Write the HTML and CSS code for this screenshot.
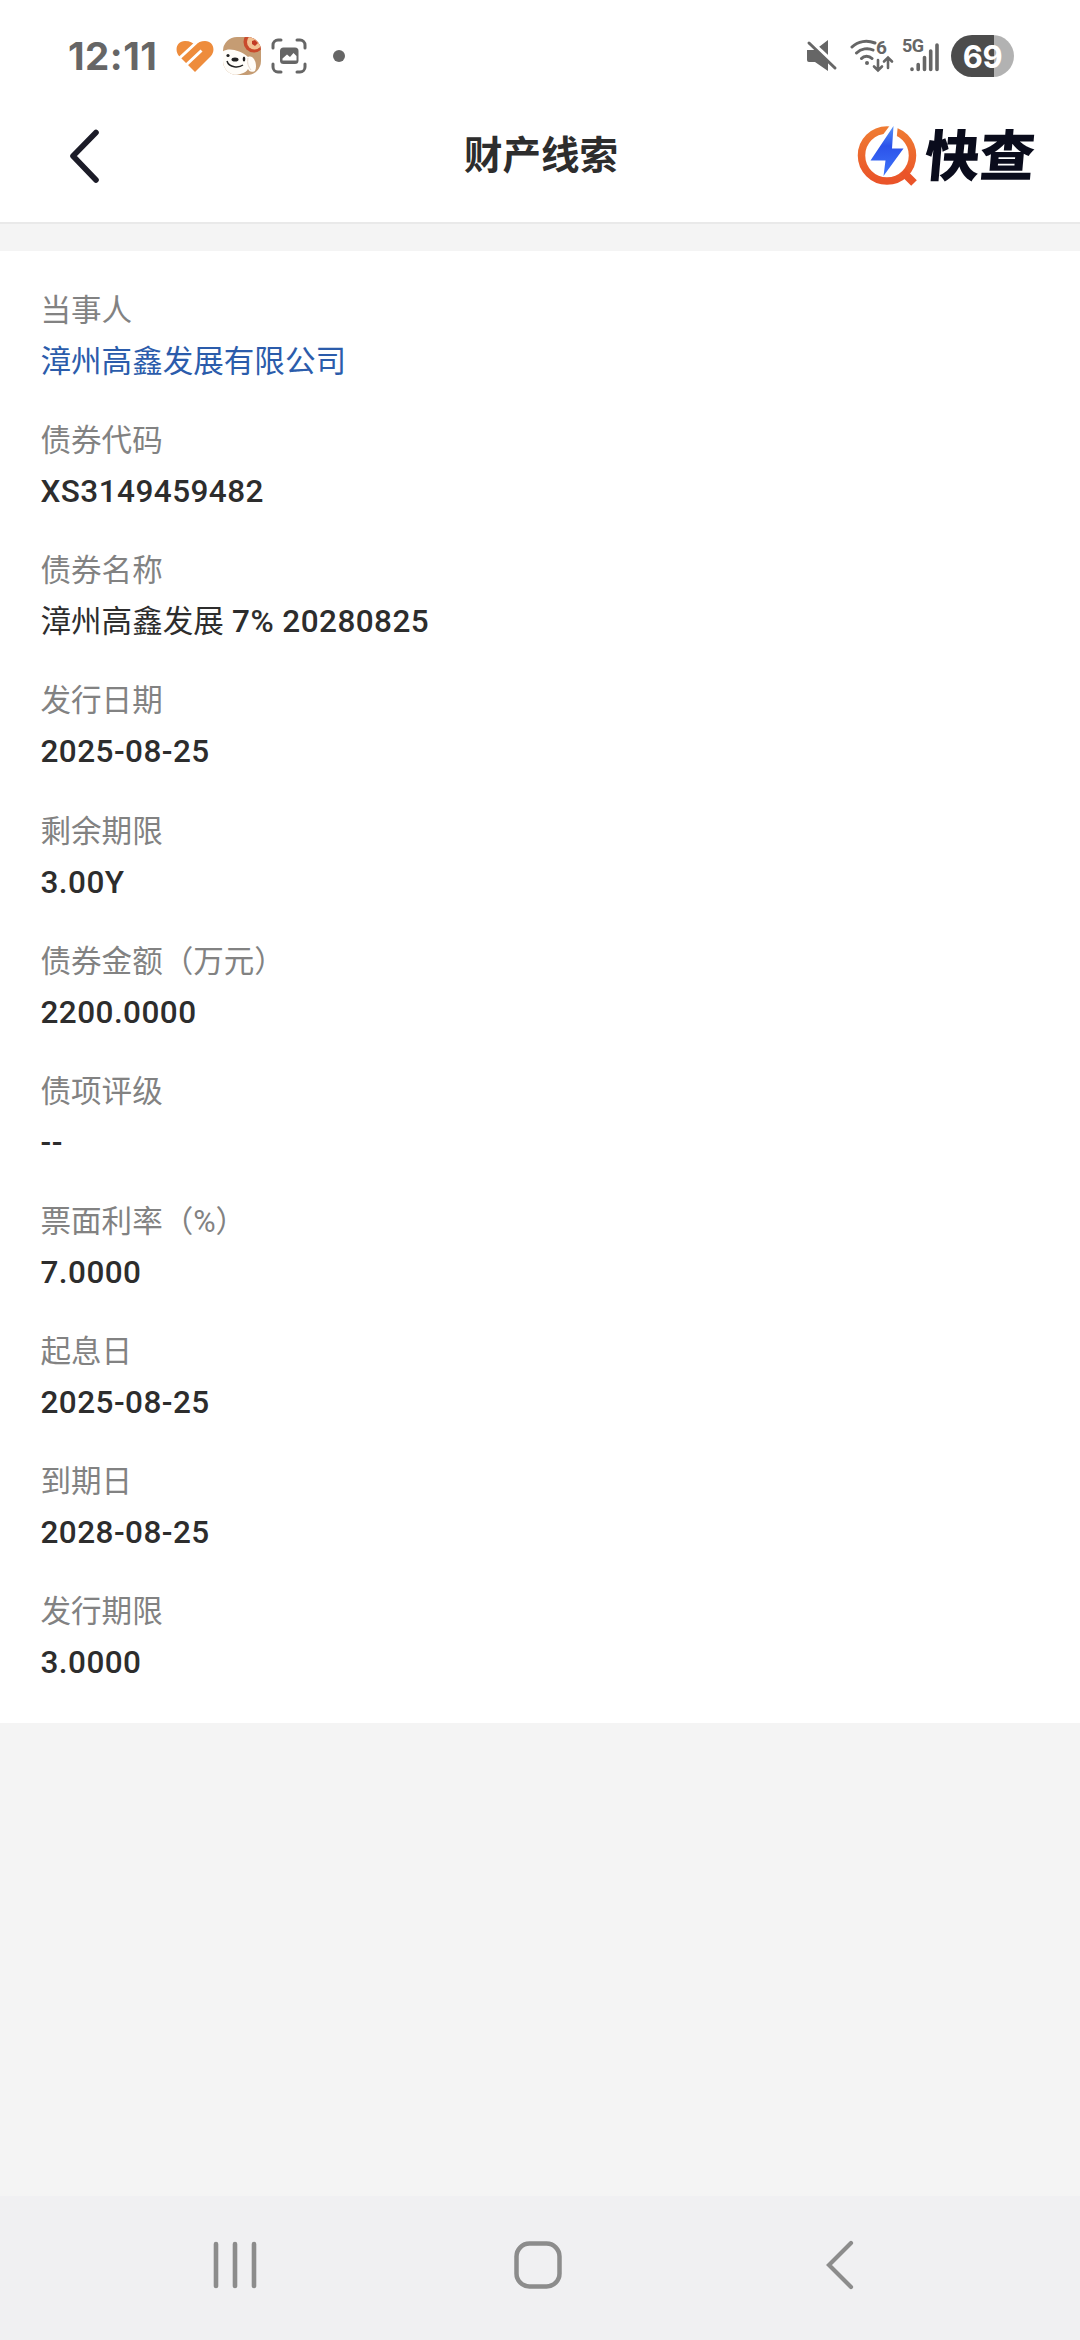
FILE: index.html
```html
<!DOCTYPE html>
<html lang="zh-CN">
<head>
  <meta charset="UTF-8" />
  <title>财产线索</title>
  <meta name="viewport" content="width=device-width, initial-scale=1.0" />
  <link rel="stylesheet" href="styles.css">
</head>
<body>
  <div class="status-bar">
    <span class="time">12:11</span>
    <svg class="heart" width="38" height="34" viewBox="0 0 38 34">
      <path d="M19 33L3 17C-2 11 1 2 9 2C14 2 17 4 19 6C22 3 25 2 29 2C37 2 40 11 35 17Z" fill="#ee8c3c" />
      <path d="M2 20.500L22 2M9 27L25.500 11.500" stroke="#fff" stroke-width="3" />
    </svg>
    <svg class="avatar" width="38" height="38" viewBox="0 0 38 38">
      <defs><clipPath id="round"><rect width="38" height="38" rx="14" /></clipPath></defs>
      <g clip-path="url(#round)">
        <rect width="38" height="38" fill="#c59c73" />
        <circle cx="31" cy="5" r="10.500" fill="#c94a2c" />
        <circle cx="31.500" cy="5" r="7.500" fill="#f2c193" />
        <path d="M29 4l3-1 3 3-3 3-3-2z" fill="#c23b25" />
        <path d="M-1 15 C5 10 17 13 25 20 C31 17 35 28 32 34 C28 36 26 34 25 32 C23 36 16 38 9 38 L-1 32Z" fill="#fffdf9" />
        <path d="M25 21 C24 26 25 29 28 33" fill="none" stroke="#e5d6c9" stroke-width="1" />
        <ellipse cx="12" cy="22.500" rx="3.500" ry="2" fill="#222" />
        <circle cx="5" cy="18.500" r="1.600" fill="#222" />
        <ellipse cx="21" cy="22" rx="1.300" ry="2.500" fill="#222" />
        <path d="M4 24 C6 31 16 31 20 28" fill="none" stroke="#222" stroke-width="1.500" />
      </g>
    </svg>
    <svg class="capture" width="36" height="36" viewBox="0 0 36 36">
      <g fill="none" stroke="#666" stroke-width="3" stroke-linecap="round">
        <path d="M2 10V7a5 5 0 0 1 5-5h3M26 2h3a5 5 0 0 1 5 5v3M34 26v3a5 5 0 0 1-5 5h-3M10 34H7a5 5 0 0 1-5-5v-3" />
      </g>
      <rect x="9" y="9.500" width="18.500" height="16.500" rx="3.500" fill="#666" />
      <path d="M11.500 22.500v-2l4.500-4 3 2.500 3.500-4 3 3v4.500z" fill="#fff" />
    </svg>
    <span class="dot"></span>

    <svg class="mute" width="32" height="32" viewBox="0 0 32 32">
      <path d="M1 10h8L22 0v31L9 22H3a2 2 0 0 1-2-2z" fill="#666" />
      <path d="M2 -1L31 26" stroke="#fff" stroke-width="4" />
      <path d="M3 3L29 28" stroke="#666" stroke-width="3" stroke-linecap="round" />
    </svg>
    <svg class="wifi" width="44" height="40" viewBox="0 -3 44 40">
      <g fill="none" stroke="#666" stroke-width="3" stroke-linecap="round">
        <path d="M2 8C8 2 17 1 25 4M6.500 14C11 9.500 18 8.500 23 11M11.500 19.500C14 16.500 19 16.500 22 19.500" />
        <path d="M28 21v10M24 27.500l4 4 4-4M38 29V19M34 22.500l4-4 4 4" stroke-width="2.600" />
      </g>
      <circle cx="17" cy="24" r="2" fill="#666" />
      <text x="26" y="14.500" class="wifi-gen">6</text>
    </svg>
    <svg class="signal" width="38" height="42" viewBox="0 -4 38 42">
      <text x="0" y="13" class="net-type">5G</text>
      <g stroke="#666" stroke-width="3.600" stroke-linecap="round">
        <path d="M10 30v.5M16.200 25.500v5M22.500 18.500v12M28.700 12v18.500M35 6v24.500" />
      </g>
    </svg>
    <span class="battery">69</span>
  </div>

  <header class="header">
    <svg class="back" width="36" height="58" viewBox="0 0 36 58">
      <path d="M30 5.500L7 29l23 24" fill="none" stroke="#1c1c28" stroke-width="5.600" stroke-linecap="round" stroke-linejoin="round" />
    </svg>
    <h1>财产线索</h1>
    <div class="brand">
      <svg width="60" height="62" viewBox="0 0 60 62">
        <defs>
          <linearGradient id="ring" x1="0" y1="0" x2="0" y2="1">
            <stop offset="0" stop-color="#ef7a32" />
            <stop offset="1" stop-color="#ea5429" />
          </linearGradient>
          <linearGradient id="bolt" x1="0" y1="0" x2="0" y2="1">
            <stop offset="0" stop-color="#5792f8" />
            <stop offset=".4" stop-color="#2b52ea" />
            <stop offset="1" stop-color="#3f75fa" />
          </linearGradient>
        </defs>
        <circle cx="30" cy="30.500" r="25.500" fill="none" stroke="url(#ring)" stroke-width="7.500" />
        <path d="M46 47l11 11" stroke="#ea5429" stroke-width="8" />
        <path d="M25 11L34 -1L41 -1L39 20Z" fill="#fff" />
        <path d="M36.500 1L35 23.500H46.500L26.500 51L28.500 35.500H13.500Z" fill="url(#bolt)" />
      </svg>
      <span>快查</span>
    </div>
  </header>

  <main class="card">
    <div class="item">
      <div class="label">当事人</div>
      <div class="value link"><span class="cn">漳州高鑫发展有限公司</span></div>
    </div>
    <div class="item">
      <div class="label">债券代码</div>
      <div class="value">XS3149459482</div>
    </div>
    <div class="item">
      <div class="label">债券名称</div>
      <div class="value"><span class="cn">漳州高鑫发展</span> 7% 20280825</div>
    </div>
    <div class="item">
      <div class="label">发行日期</div>
      <div class="value">2025-08-25</div>
    </div>
    <div class="item">
      <div class="label">剩余期限</div>
      <div class="value">3.00Y</div>
    </div>
    <div class="item">
      <div class="label">债券金额（万元）</div>
      <div class="value">2200.0000</div>
    </div>
    <div class="item">
      <div class="label">债项评级</div>
      <div class="value">--</div>
    </div>
    <div class="item">
      <div class="label">票面利率（%）</div>
      <div class="value">7.0000</div>
    </div>
    <div class="item">
      <div class="label">起息日</div>
      <div class="value">2025-08-25</div>
    </div>
    <div class="item">
      <div class="label">到期日</div>
      <div class="value">2028-08-25</div>
    </div>
    <div class="item">
      <div class="label">发行期限</div>
      <div class="value">3.0000</div>
    </div>
  </main>

  <nav class="nav-bar">
    <svg width="48" height="52" viewBox="0 0 48 52">
      <path d="M5 5v42M24 5v42M43 5v42" stroke="#8c8c8c" stroke-width="4.600" stroke-linecap="round" />
    </svg>
    <svg class="home" width="52" height="52" viewBox="0 0 52 52">
      <rect x="4.500" y="4.500" width="43" height="43" rx="13" fill="none" stroke="#8c8c8c" stroke-width="4.500" />
    </svg>
    <svg width="34" height="52" viewBox="0 0 34 52">
      <path d="M28 4L6 26l22 22" fill="none" stroke="#8c8c8c" stroke-width="4.200" stroke-linecap="round" />
    </svg>
  </nav>
</body>
</html>
```

FILE: styles.css
```css
:root {
  --bg: #f4f4f4;
  --card: #ffffff;
  --text: #2d2d2d;
  --label: #828282;
  --link: #2b5cab;
  --status: #666666;
}

* {
  box-sizing: border-box;
}

body {
  margin: 0;
  height: 2340px;
  display: flex;
  flex-direction: column;
  background: var(--bg);
  color: var(--text);
  font-family: Roboto, "Noto Sans CJK SC", sans-serif;
}

svg {
  display: block;
  flex: none;
}

.status-bar {
  display: flex;
  align-items: center;
  height: 112px;
  padding: 0 66px 0 68px;
  background: var(--card);
}

.time {
  width: 108px;
  font-family: Inter, sans-serif;
  font-size: 38.5px;
  font-weight: 700;
  letter-spacing: 0.5px;
  line-height: 46px;
  color: var(--status);
}

.avatar {
  margin-left: 9px;
}

.capture {
  margin-left: 10px;
}

.dot {
  width: 12px;
  height: 12px;
  margin-left: 26px;
  border-radius: 50%;
  background: var(--status);
}

.mute {
  margin-left: auto;
}

.wifi {
  margin-left: 12px;
}

.wifi-gen {
  font-size: 19px;
  font-weight: 700;
  fill: #666;
}

.net-type {
  font-size: 18px;
  font-weight: 700;
  letter-spacing: -0.5px;
  fill: #666;
}

.signal {
  margin-left: 8px;
}

.battery {
  width: 63px;
  height: 42px;
  margin-left: 11px;
  border-radius: 21px;
  background: linear-gradient(to right, #4c4c4c 68%, #b2b2b2 68%);
  color: #fff;
  font-family: Inter, sans-serif;
  font-size: 31px;
  font-weight: 700;
  letter-spacing: -0.5px;
  line-height: 43px;
  text-align: center;
}

.header {
  display: grid;
  grid-template-columns: 398px auto 1fr;
  align-items: center;
  height: 112px;
  padding: 0 45px 23px 66px;
  border-bottom: 2px solid #e9e9e9;
  background: var(--card);
}

.header h1 {
  margin: 0;
  font-size: 38.5px;
  font-weight: 700;
  line-height: 56px;
}

.brand {
  display: flex;
  align-items: center;
  justify-self: end;
}

.brand span {
  margin-top: 3px;
  margin-left: 8px;
  font-size: 55px;
  font-weight: 900;
  line-height: 60px;
  color: #0a0c1c;
  transform: skewX(-5deg);
}

.card {
  display: flex;
  flex-direction: column;
  gap: 28.15px;
  height: 1472px;
  margin-top: 27px;
  padding: 34px 40.5px;
  background: var(--card);
}

.label,
.value {
  height: 51px;
  font-size: 30.55px;
  line-height: 51px;
}

.label {
  color: var(--label);
}

.value {
  font-size: 31.5px;
  font-weight: 500;
  letter-spacing: 0.45px;
  line-height: 52px;
}

.value .cn {
  font-size: 30.55px;
  font-weight: 400;
  letter-spacing: 0;
}

.link {
  color: var(--link);
}

.nav-bar {
  display: flex;
  justify-content: space-between;
  align-items: center;
  height: 144px;
  margin-top: auto;
  padding: 0 223px 6px 211px;
  background: #f0f0f2;
}

.home {
  margin-right: 6px;
}
```
